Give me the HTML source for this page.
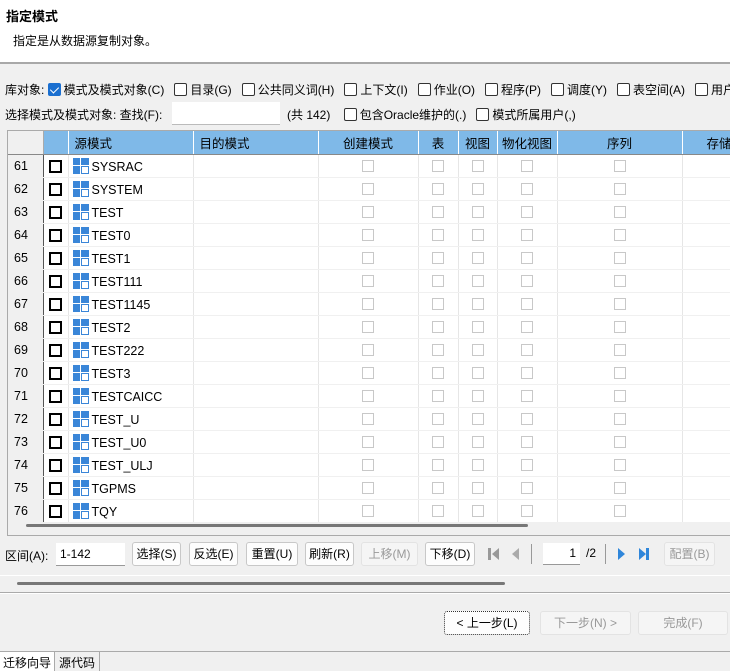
<!DOCTYPE html>
<html><head><meta charset="utf-8"><style>
*{box-sizing:border-box;margin:0;padding:0}
body{width:730px;height:671px;overflow:hidden;background:#f0f0f0;font-family:"Liberation Sans","Noto Sans CJK SC",sans-serif;font-size:12px;color:#000;position:relative}
.a{position:absolute;white-space:nowrap}
.cb{display:inline-block;width:13px;height:13px;border:1px solid #333;border-radius:2px;vertical-align:-2px;background:#fff;margin-right:3px}
.cbc{background:#1a6fd0;border-color:#1a6fd0;position:relative}
.cbc:after{content:"";position:absolute;left:3px;top:1px;width:4px;height:7px;border:solid #fff;border-width:0 1.5px 1.5px 0;transform:rotate(45deg)}
.btn{position:absolute;top:542px;height:24px;border:1px solid #c8c8c8;border-radius:3px;background:#fdfdfd;text-align:center;line-height:22px;font-size:12px}
.dis{color:#999;background:#f5f5f5;border-color:#e3e3e3}
table{border-collapse:collapse;table-layout:fixed}
td,th{height:23px;border-right:1px solid #e6e6e6;border-bottom:1px solid #f0f0f0;font-weight:normal;font-size:12.5px;padding:0;overflow:hidden;white-space:nowrap}
th{background:#7fb9e8;border-right:1px solid #fff;border-bottom:1px solid #888;text-align:center}
.rn{background:#f0f0f0;border-right:1px solid #555;text-align:left;padding-left:6px}
.sc{display:inline-block;width:12px;height:12px;border:1px solid #c8c8c8;vertical-align:middle}
.bx{display:inline-block;width:13px;height:13px;border:2px solid #000;vertical-align:middle}
.ic{display:inline-block;width:16px;height:16px;vertical-align:-3px;margin-right:3px}
</style></head><body>
<div class="a" style="left:0;top:0;width:730px;height:64px;background:#fff;border-bottom:2px solid #a8a8a8"></div>
<div class="a" style="left:6px;top:6px;font-weight:bold;font-size:13px">指定模式</div>
<div class="a" style="left:13px;top:32px">指定是从数据源复制对象。</div>
<div class="a" style="left:5px;top:81px">库对象: <span class="cb cbc"></span>模式及模式对象(C)&nbsp;&nbsp; <span class="cb"></span>目录(G)&nbsp;&nbsp; <span class="cb"></span>公共同义词(H)&nbsp;&nbsp; <span class="cb"></span>上下文(I)&nbsp;&nbsp; <span class="cb"></span>作业(O)&nbsp;&nbsp; <span class="cb"></span>程序(P)&nbsp;&nbsp; <span class="cb"></span>调度(Y)&nbsp;&nbsp; <span class="cb"></span>表空间(A)&nbsp;&nbsp; <span class="cb"></span>用户</div>
<div class="a" style="left:5px;top:106px">选择模式及模式对象: 查找(F):</div>
<div class="a" style="left:172px;top:102px;width:108px;height:23px;background:#fff;border-bottom:1px solid #bbb"></div>
<div class="a" style="left:287px;top:106px">(共 142)&nbsp;&nbsp;&nbsp; <span class="cb"></span>包含Oracle维护的(.)&nbsp;&nbsp; <span class="cb"></span>模式所属用户(,)</div>
<div class="a" style="left:7px;top:130px;width:730px;height:406px;background:#f0f0f0;border:1px solid #aaa;border-right:none;overflow:hidden">
<table style="width:800px;background:#fff">
<colgroup><col style="width:35px"><col style="width:25px"><col style="width:125px"><col style="width:125px"><col style="width:100px"><col style="width:40px"><col style="width:39px"><col style="width:60px"><col style="width:125px"><col style="width:126px"></colgroup>
<tr><th style="background:#f0f0f0;border-right:1px solid #aaa"></th><th></th><th style="text-align:left;padding-left:6px">源模式</th><th style="text-align:left;padding-left:6px">目的模式</th><th>创建模式</th><th>表</th><th>视图</th><th>物化视图</th><th>序列</th><th style="text-align:left;padding-left:24px">存储</th></tr>
</table>
<div class="a" style="left:18px;top:393px;width:502px;height:3px;background:#777;border-radius:2px"></div>
</div>
<script>
var n=["SYSRAC","SYSTEM","TEST","TEST0","TEST1","TEST111","TEST1145","TEST2","TEST222","TEST3","TESTCAICC","TEST_U","TEST_U0","TEST_ULJ","TGPMS","TQY"];
var ic='<svg class="ic" viewBox="0 0 16 16"><rect x="0" y="0" width="7" height="7" fill="#3a86d8"/><rect x="8" y="0" width="8" height="7" fill="#3a86d8"/><rect x="0" y="8" width="7" height="8" fill="#3a86d8"/><rect x="8.5" y="8.5" width="7" height="7" fill="none" stroke="#3a86d8"/></svg>';
var s='<span class="sc"></span>',h='';
n.forEach(function(x,i){h+='<tr><td class="rn">'+(61+i)+'</td><td style="text-align:center"><span class="bx"></span></td><td style="padding-left:4px">'+ic+x+'</td><td></td><td style="text-align:center">'+s+'</td><td style="text-align:center">'+s+'</td><td style="text-align:center">'+s+'</td><td style="text-align:center">'+s+'</td><td style="text-align:center">'+s+'</td><td></td></tr>';});
document.querySelector('table').insertAdjacentHTML('beforeend',h);
</script>
<div class="a" style="left:5px;top:547px">区间(A):</div>
<div class="a" style="left:56px;top:543px;width:69px;height:23px;background:#fff;border-bottom:1px solid #999;padding:4px 0 0 4px">1-142</div>
<div class="btn" style="left:132px;width:49px">选择(S)</div>
<div class="btn" style="left:189px;width:49px">反选(E)</div>
<div class="btn" style="left:246px;width:52px">重置(U)</div>
<div class="btn" style="left:305px;width:49px">刷新(R)</div>
<div class="btn dis" style="left:361px;width:57px">上移(M)</div>
<div class="btn" style="left:425px;width:50px">下移(D)</div>
<svg class="a" style="left:486px;top:546px" width="40" height="16"><rect x="2" y="2" width="3" height="12" fill="#999"/><path d="M13 2 L6 8 L13 14Z" fill="#999"/><path d="M33 2 L26 8 L33 14Z" fill="#aaa"/></svg>
<div class="a" style="left:531px;top:544px;width:1px;height:20px;background:#999"></div>
<div class="a" style="left:543px;top:543px;width:37px;height:22px;background:#fff;border-bottom:1px solid #999;text-align:right;padding:3px 4px 0 0">1</div>
<div class="a" style="left:586px;top:546px">/2</div>
<div class="a" style="left:605px;top:544px;width:1px;height:20px;background:#999"></div>
<svg class="a" style="left:615px;top:546px" width="40" height="16"><path d="M3 2 L10 8 L3 14Z" fill="#2f86da"/><path d="M24 2 L31 8 L24 14Z" fill="#2f86da"/><rect x="31" y="2" width="3" height="12" fill="#2f86da"/></svg>
<div class="btn dis" style="left:664px;width:51px">配置(B)</div>
<div class="a" style="left:0;top:575px;width:730px;height:1px;background:#fff"></div>
<div class="a" style="left:17px;top:582px;width:488px;height:3px;background:#777;border-radius:2px"></div>
<div class="a" style="left:0;top:592px;width:730px;height:1px;background:#aaa"></div>
<div class="a" style="left:0;top:593px;width:730px;height:1px;background:#fff"></div>
<div class="btn" style="left:444px;top:611px;width:86px;border:1px dotted #333;line-height:22px">&lt; 上一步(L)</div>
<div class="btn dis" style="left:540px;top:611px;width:91px">下一步(N) &gt;</div>
<div class="btn dis" style="left:638px;top:611px;width:90px">完成(F)</div>
<div class="a" style="left:0;top:651px;width:730px;height:1px;background:#aaa"></div>
<div class="a" style="left:0;top:652px;width:55px;height:19px;background:#fff;border-right:1px solid #aaa;padding:2px 0 0 3px">迁移向导</div>
<div class="a" style="left:55px;top:652px;width:45px;height:19px;border-right:1px solid #aaa;padding:2px 0 0 4px">源代码</div>
</body></html>
